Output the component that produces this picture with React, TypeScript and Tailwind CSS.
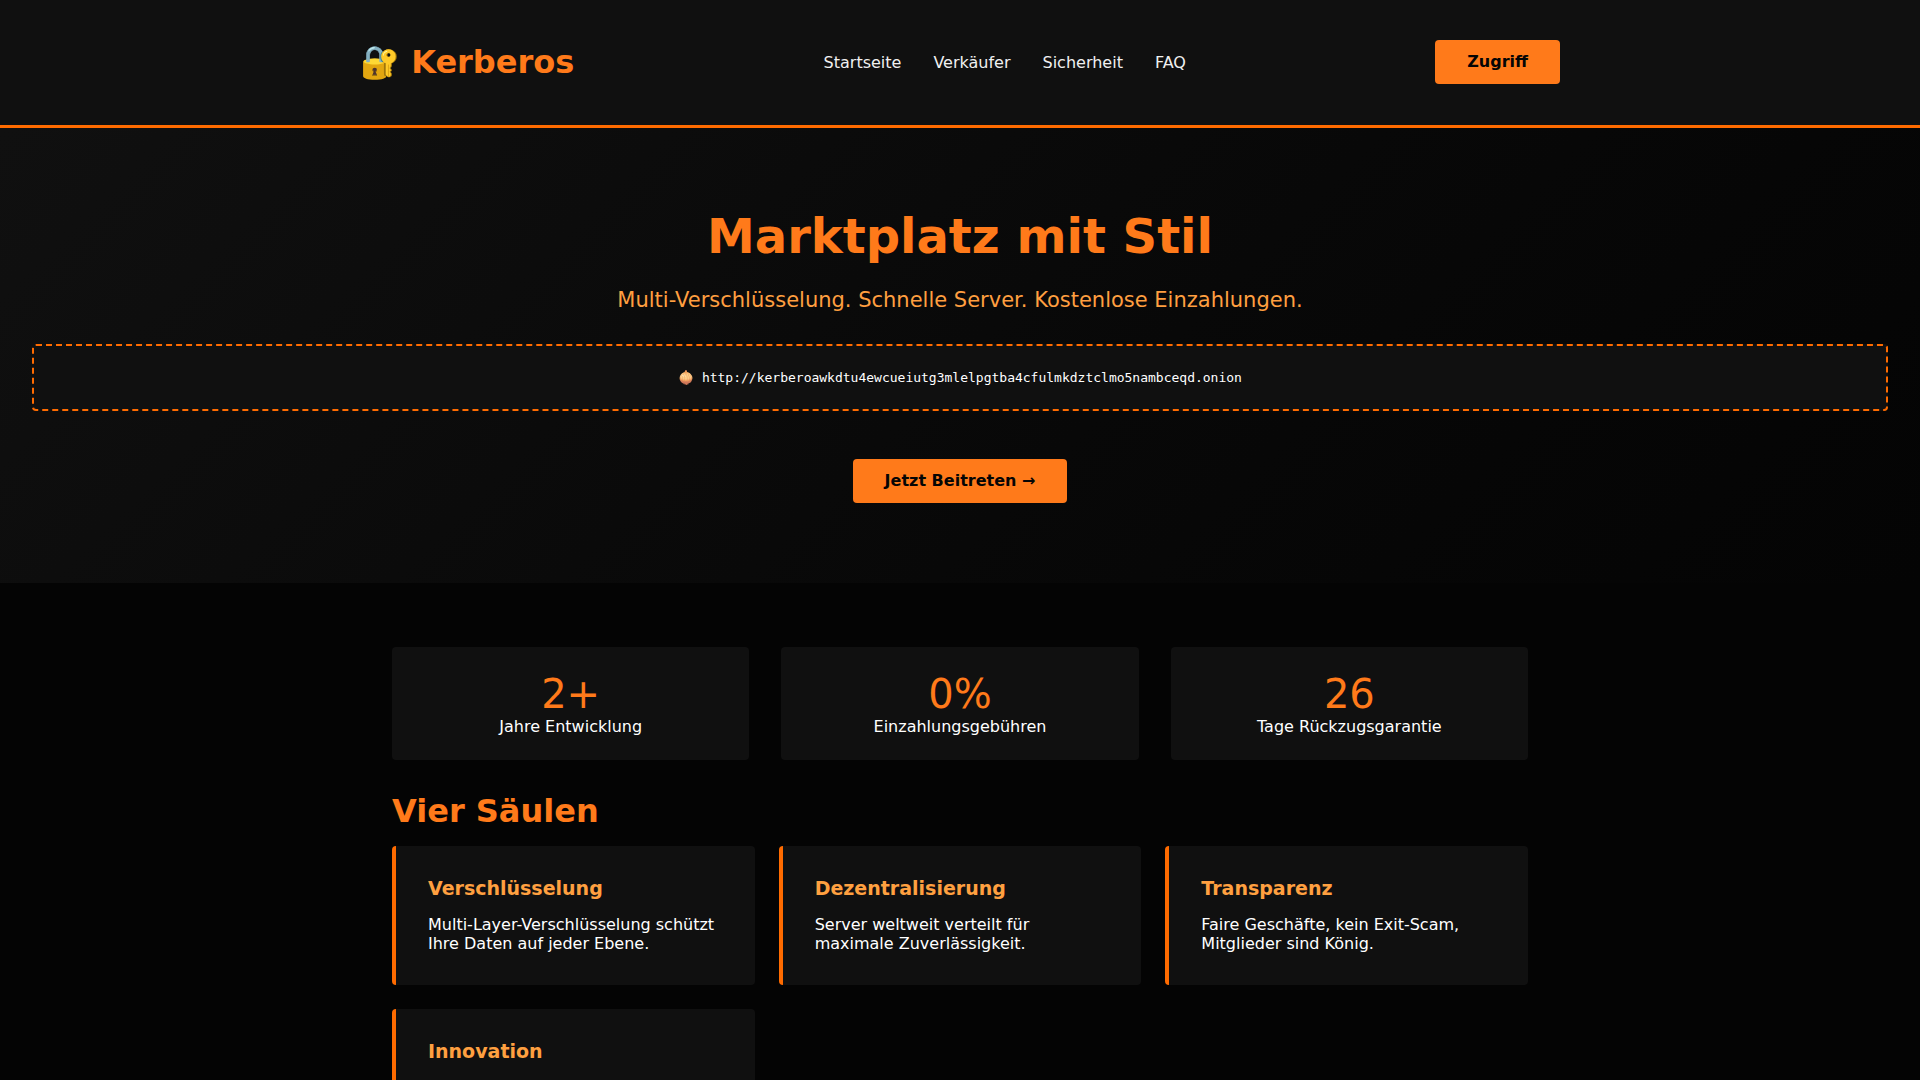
const navLinks = [
  { label: "Startseite", href: "#start" },
  { label: "Verkäufer", href: "#verkaeufer" },
  { label: "Sicherheit", href: "#sicherheit" },
  { label: "FAQ", href: "#faq" },
];

const stats = [
  { value: "2+", label: "Jahre Entwicklung" },
  { value: "0%", label: "Einzahlungsgebühren" },
  { value: "26", label: "Tage Rückzugsgarantie" },
];

const pillars = [
  {
    title: "Verschlüsselung",
    text: "Multi-Layer-Verschlüsselung schützt Ihre Daten auf jeder Ebene.",
  },
  {
    title: "Dezentralisierung",
    text: "Server weltweit verteilt für maximale Zuverlässigkeit.",
  },
  {
    title: "Transparenz",
    text: "Faire Geschäfte, kein Exit-Scam, Mitglieder sind König.",
  },
  { title: "Innovation", text: "" },
];

function Button({ label }: { label: string }) {
  return (
    <button className="rounded-sm bg-[#ff7a1a] px-8 py-3 leading-5 font-bold text-[#050505] hover:bg-[#ff9f40]">
      {label}
    </button>
  );
}

function Header() {
  return (
    <header className="border-b-3 border-[#ff6b00] bg-[#101010] px-8 pt-8 pb-[33px]">
      <div className="mx-auto flex min-h-15 max-w-[1200px] items-center justify-between">
        <div className="text-[32px] leading-[38px] font-bold text-[#ff7a1a]">🔐 Kerberos</div>
        <nav className="flex gap-8 text-[#f0f0f0]">
          {navLinks.map((link) => (
            <a key={link.label} href={link.href} className="hover:text-[#ff7a1a]">
              {link.label}
            </a>
          ))}
        </nav>
        <Button label="Zugriff" />
      </div>
    </header>
  );
}

function Hero() {
  return (
    <section className="bg-linear-135 from-[#101010] to-[#040404] px-8 py-20 text-center">
      <h1 className="mb-6 text-5xl leading-[56px] font-bold text-[#ff7a1a]">
        Marktplatz mit Stil
      </h1>
      <p className="mb-8 text-[21px] leading-6 text-[#ff9f40]">
        Multi-Verschlüsselung. Schnelle Server. Kostenlose Einzahlungen.
      </p>
      <div className="mb-12 rounded-sm border-2 border-dashed border-[#ff6b00] bg-[#101010] p-6 font-['DejaVu_Sans_Mono',monospace] text-[13px] leading-[15px]">
        🧅 http://kerberoawkdtu4ewcueiutg3mlelpgtba4cfulmkdztclmo5nambceqd.onion
      </div>
      <Button label="Jetzt Beitreten →" />
    </section>
  );
}

export default function App() {
  return (
    <div className="h-screen overflow-hidden bg-[#040404] font-['DejaVu_Sans',sans-serif] text-base leading-[19px] text-white">
      <Header />
      <Hero />
      <main className="mx-auto max-w-[1200px] px-8 py-16">
        <div className="mb-8 grid grid-cols-3 gap-8">
          {stats.map((stat) => (
            <div key={stat.label} className="rounded-sm bg-[#101010] p-6 text-center">
              <div className="text-[40px] leading-[46px] text-[#ff7a1a]">{stat.value}</div>
              <div>{stat.label}</div>
            </div>
          ))}
        </div>
        <h2 className="mb-4 text-[32px] leading-[38px] font-bold text-[#ff7a1a]">Vier Säulen</h2>
        <div className="grid grid-cols-3 gap-6">
          {pillars.map((pillar) => (
            <div
              key={pillar.title}
              className="rounded-sm border-l-4 border-[#ff6b00] bg-[#101010] p-8"
            >
              <h3 className="mb-4 text-[19px] leading-[21px] font-bold text-[#ffa040]">
                {pillar.title}
              </h3>
              <p>{pillar.text}</p>
            </div>
          ))}
        </div>
      </main>
    </div>
  );
}
